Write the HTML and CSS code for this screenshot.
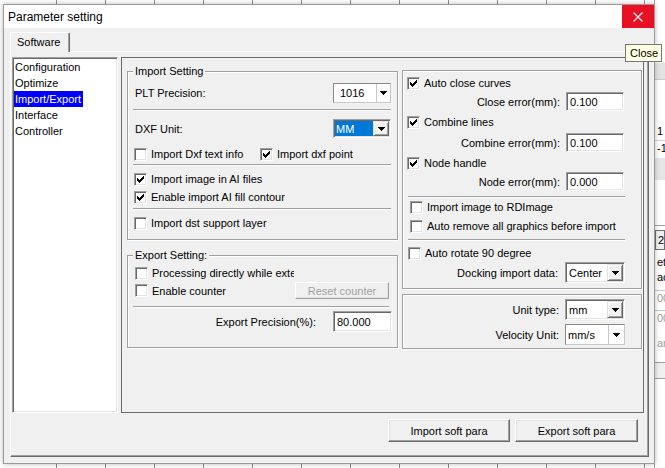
FILE: index.html
```html
<!DOCTYPE html>
<html>
<head>
<meta charset="utf-8">
<title>Parameter setting</title>
<link rel="stylesheet" href="styles.css">
</head>
<body>
<div class="app">
  <div class="app-grid"></div>
  <div class="app-side">
    <div class="sd sd0"></div>
    <div class="sd sd1"></div>
    <div class="sd sd2"></div>
    <div class="sd sd3">1</div>
    <div class="sd sd4">-1</div>
    <div class="sd sd5"></div>
    <div class="sd sd6"></div>
    <div class="sd sd7">2</div>
    <div class="sd sd8">etu</div>
    <div class="sd sd9">ac</div>
    <div class="sd sd10">000</div>
    <div class="sd sd11">000</div>
    <div class="sd sd12">arr</div>
    <div class="sd sd13"></div>
  </div>
</div>

<div class="dialog">
  <div class="titlebar">
    <span class="title">Parameter setting</span>
    <div class="close">
      <svg width="10" height="10" viewBox="0 0 10 10"><path d="M0.5 0.5L9.5 9.5M9.5 0.5L0.5 9.5" stroke="#fff" stroke-width="1.1" fill="none"/></svg>
    </div>
  </div>
  <div class="dlg-body">
    <div class="tabs"><div class="tab">Software</div></div>
    <div class="page">
      <div class="page-main">
        <div class="list">
          <div class="item"><span>Configuration</span></div>
          <div class="item"><span>Optimize</span></div>
          <div class="item"><span class="sel">Import/Export</span></div>
          <div class="item"><span>Interface</span></div>
          <div class="item"><span>Controller</span></div>
        </div>
        <div class="panel">
          <div class="col-left">
            <div class="group g-imp">
              <div class="caption">Import Setting</div>
              <div class="row r-plt">
                <span class="lbl grow">PLT Precision:</span>
                <div class="combo flat cw58 h20"><span class="cv cv-plt">1016</span><span class="fbtn fb14"><svg class="arr" width="7" height="4" viewBox="0 0 7 4"><path d="M0 0h7v1h-1v1h-1v1h-1v1h-1v-1h-1v-1h-1v-1h-1z"/></svg></span></div>
              </div>
              <div class="sep s-a"></div>
              <div class="row r-dxf">
                <span class="lbl grow">DXF Unit:</span>
                <div class="combo deep cw58 h19"><span class="cv sel-v">MM</span><span class="cbtn"><svg class="arr" width="7" height="4" viewBox="0 0 7 4"><path d="M0 0h7v1h-1v1h-1v1h-1v1h-1v-1h-1v-1h-1v-1h-1z"/></svg></span></div>
              </div>
              <div class="row r-chk1">
                <label class="chk w126"><span class="cb"></span>Import Dxf text info</label>
                <label class="chk"><span class="cb"><svg width="11" height="11" viewBox="0 0 11 11"><path d="M8 2h1v1h-1z M7 3h2v1h-2z M2 4h1v1h-1z M6 4h3v1h-3z M2 5h2v1h-2z M5 5h3v1h-3z M2 6h5v1h-5z M3 7h3v1h-3z M4 8h1v1h-1z"/></svg></span>Import dxf point</label>
              </div>
              <div class="sep s-b"></div>
              <div class="row r-ai1">
                <label class="chk"><span class="cb"><svg width="11" height="11" viewBox="0 0 11 11"><path d="M8 2h1v1h-1z M7 3h2v1h-2z M2 4h1v1h-1z M6 4h3v1h-3z M2 5h2v1h-2z M5 5h3v1h-3z M2 6h5v1h-5z M3 7h3v1h-3z M4 8h1v1h-1z"/></svg></span>Import image in AI files</label>
              </div>
              <div class="row r-ai2">
                <label class="chk"><span class="cb"><svg width="11" height="11" viewBox="0 0 11 11"><path d="M8 2h1v1h-1z M7 3h2v1h-2z M2 4h1v1h-1z M6 4h3v1h-3z M2 5h2v1h-2z M5 5h3v1h-3z M2 6h5v1h-5z M3 7h3v1h-3z M4 8h1v1h-1z"/></svg></span>Enable import AI fill contour</label>
              </div>
              <div class="sep s-c"></div>
              <div class="row r-dst">
                <label class="chk"><span class="cb"></span>Import dst support layer</label>
              </div>
            </div>

            <div class="group g-exp">
              <div class="caption">Export Setting:</div>
              <div class="row r-proc">
                <label class="chk"><span class="cb"></span><span class="clip">Processing directly while external</span></label>
              </div>
              <div class="row r-cnt">
                <label class="chk w160"><span class="cb"></span>Enable counter</label>
                <div class="btn-dis">Reset counter</div>
              </div>
              <div class="sep s-d"></div>
              <div class="row r-prec">
                <span class="lbl mr17">Export Precision(%):</span>
                <div class="inp iw59 h21">80.000</div>
              </div>
            </div>
          </div>

          <div class="col-right">
            <div class="group g-r1">
              <div class="row r-acc">
                <label class="chk"><span class="cb"><svg width="11" height="11" viewBox="0 0 11 11"><path d="M8 2h1v1h-1z M7 3h2v1h-2z M2 4h1v1h-1z M6 4h3v1h-3z M2 5h2v1h-2z M5 5h3v1h-3z M2 6h5v1h-5z M3 7h3v1h-3z M4 8h1v1h-1z"/></svg></span>Auto close curves</label>
              </div>
              <div class="row r-err r-e1">
                <span class="lbl mr6">Close error(mm):</span>
                <div class="inp iw58 h19">0.100</div>
              </div>
              <div class="row r-cl">
                <label class="chk"><span class="cb"><svg width="11" height="11" viewBox="0 0 11 11"><path d="M8 2h1v1h-1z M7 3h2v1h-2z M2 4h1v1h-1z M6 4h3v1h-3z M2 5h2v1h-2z M5 5h3v1h-3z M2 6h5v1h-5z M3 7h3v1h-3z M4 8h1v1h-1z"/></svg></span>Combine lines</label>
              </div>
              <div class="row r-err r-e2">
                <span class="lbl mr6">Combine error(mm):</span>
                <div class="inp iw58 h19">0.100</div>
              </div>
              <div class="row r-nh">
                <label class="chk"><span class="cb"><svg width="11" height="11" viewBox="0 0 11 11"><path d="M8 2h1v1h-1z M7 3h2v1h-2z M2 4h1v1h-1z M6 4h3v1h-3z M2 5h2v1h-2z M5 5h3v1h-3z M2 6h5v1h-5z M3 7h3v1h-3z M4 8h1v1h-1z"/></svg></span>Node handle</label>
              </div>
              <div class="row r-err r-e3">
                <span class="lbl mr6">Node error(mm):</span>
                <div class="inp iw58 h19">0.000</div>
              </div>
              <div class="sep s-e"></div>
              <div class="row r-rd">
                <label class="chk"><span class="cb"></span>Import image to RDImage</label>
              </div>
              <div class="row r-arm">
                <label class="chk"><span class="cb"></span>Auto remove all graphics before import</label>
              </div>
              <div class="sep s-f"></div>
              <div class="row r-rot">
                <label class="chk"><span class="cb"></span>Auto rotate 90 degree</label>
              </div>
              <div class="row r-dock">
                <span class="lbl mr7">Docking import data:</span>
                <div class="combo deep cw60 h21"><span class="cv">Center</span><span class="cbtn"><svg class="arr" width="7" height="4" viewBox="0 0 7 4"><path d="M0 0h7v1h-1v1h-1v1h-1v1h-1v-1h-1v-1h-1v-1h-1z"/></svg></span></div>
              </div>
            </div>

            <div class="group g-r2">
              <div class="row r-unit">
                <span class="lbl mr6">Unit type:</span>
                <div class="combo deep cw60 h21"><span class="cv">mm</span><span class="cbtn"><svg class="arr" width="7" height="4" viewBox="0 0 7 4"><path d="M0 0h7v1h-1v1h-1v1h-1v1h-1v-1h-1v-1h-1v-1h-1z"/></svg></span></div>
              </div>
              <div class="row r-vel">
                <span class="lbl mr6">Velocity Unit:</span>
                <div class="combo flat cw60 h21"><span class="cv">mm/s</span><span class="fbtn fb16"><svg class="arr" width="7" height="4" viewBox="0 0 7 4"><path d="M0 0h7v1h-1v1h-1v1h-1v1h-1v-1h-1v-1h-1v-1h-1z"/></svg></span></div>
              </div>
            </div>
          </div>
        </div>
      </div>
      <div class="page-buttons">
        <div class="btn">Import soft para</div>
        <div class="btn">Export soft para</div>
      </div>
    </div>
  </div>
</div>

<div class="tooltip">Close</div>
</body>
</html>
```

FILE: styles.css
```css
* { box-sizing: border-box; }
html, body { margin: 0; padding: 0; }
body {
  width: 665px;
  height: 468px;
  overflow: hidden;
  position: relative;
  background: #fff;
  font-family: "Liberation Sans", Arial, sans-serif;
  font-size: 11px;
  color: #000;
}

/* underlying application */
.app { display: flex; width: 665px; height: 468px; }
.app-grid {
  width: 654px;
  height: 468px;
  background-image: repeating-linear-gradient(90deg, transparent 0, transparent 48px, #8e8e8e 48px, #8e8e8e 49px);
  background-position: 8px 0;
}
.app-side { flex: 1; display: flex; flex-direction: column; overflow: hidden; border-left: 1px solid #9a9a9a; }
.sd { flex: none; padding-left: 2px; white-space: nowrap; line-height: 15px; }
.sd0 { height: 63px; }
.sd1 { height: 17px; background: #e3e3e3; border-bottom: 1px solid #c8c8c8; }
.sd2 { height: 44px; }
.sd3 { height: 17px; border-bottom: 1px solid #d0d0d0; }
.sd4 { height: 17px; }
.sd5 { height: 22px; background: #e6e6e6; }
.sd6 { height: 46px; border-bottom: 1px solid #a0a0a0; }
.sd7 { height: 20px; margin-top: 4px; border: 1px solid #707070; background: #f0f0f0; line-height: 18px; }
.sd8 { height: 15px; margin-top: 5px; }
.sd9 { height: 15px; }
.sd10 { height: 18px; margin-top: 5px; color: #a0a0a0; border-top: 1px solid #c8c8c8; }
.sd11 { height: 18px; margin-top: 2px; color: #a0a0a0; border-top: 1px solid #c8c8c8; }
.sd12 { height: 18px; margin-top: 8px; color: #a0a0a0; }
.sd13 { height: 17px; margin-top: 8px; border-top: 1px solid #a0a0a0; border-bottom: 1px solid #a0a0a0; background: #f0f0f0; }

/* dialog window */
.dialog {
  position: absolute;
  left: 3px;
  top: 4px;
  width: 652px;
  height: 460px;
  border: 1px solid #9a9a9a;
  background: #f0f0f0;
  box-shadow: 0 0 5px rgba(0, 0, 0, 0.28);
  display: flex;
  flex-direction: column;
}
.titlebar {
  height: 23px;
  background: #fff;
  display: flex;
  align-items: center;
  padding-left: 4px;
  font-size: 12px;
}
.title { flex: 1; }
.close {
  width: 32px;
  height: 23px;
  background: #e81123;
  display: flex;
  align-items: center;
  justify-content: center;
}
.close svg { display: block; }

.dlg-body { flex: 1; padding: 4px 5px 6px 6px; display: flex; flex-direction: column; }
.tabs { display: flex; height: 20px; }
.tab {
  position: relative;
  z-index: 1;
  width: 60px;
  height: 20px;
  padding-left: 6px;
  line-height: 18px;
  background: #f0f0f0;
  border-top: 1px solid #fff;
  border-left: 1px solid #fff;
  border-right: 1px solid #696969;
  box-shadow: inset -1px 0 0 #a0a0a0;
  border-radius: 2px 2px 0 0;
}
.page {
  margin-top: -1px;
  height: 406px;
  border: 1px solid;
  border-color: #fff #696969 #696969 #fff;
  box-shadow: inset -1px -1px 0 #a0a0a0;
  padding: 5px 4px 0 1px;
}
.page-main { display: flex; gap: 3px; height: 356px; }

/* tree list */
.list {
  width: 106px;
  height: 356px;
  background: #fff;
  border: 1px solid;
  border-color: #a0a0a0 #fff #fff #a0a0a0;
  box-shadow: inset 1px 1px 0 #696969, inset -1px -1px 0 #e3e3e3;
  padding: 1px;
}
.item { height: 16px; line-height: 16px; white-space: nowrap; }
.item span { padding: 0 2px 0 1px; display: inline-block; height: 16px; }
.item .sel { background: #0000ff; color: #fff; }

/* settings panel */
.panel {
  width: 523px;
  height: 356px;
  border: 1px solid #6b6b6b;
  display: flex;
  gap: 4px;
  padding: 0 1px 0 5px;
}
.col-left { width: 271px; }
.col-right { width: 240px; }

.group {
  border: 1px solid #a0a0a0;
  box-shadow: inset 1px 1px 0 #fff, 1px 1px 0 #fff;
}
.caption {
  width: fit-content;
  margin: -7px 0 0 5px;
  padding: 0 2px;
  height: 13px;
  line-height: 13px;
  background: #f0f0f0;
}
.g-imp { margin-top: 13px; padding-bottom: 8px; }
.g-exp { margin-top: 15px; padding-bottom: 15px; }
.g-r1 { margin-top: 12px; padding-bottom: 5px; }
.g-r2 { margin-top: 5px; padding-bottom: 3px; }

.row { display: flex; align-items: center; height: 16px; white-space: nowrap; }
.grow { flex: 1; }
.mr6 { margin-right: 6px; }
.mr7 { margin-right: 7px; }
.mr17 { margin-right: 17px; }

.r-plt { margin: 5px 6px 0 7px; height: 20px; }
.r-dxf { margin: 8px 6px 0 7px; height: 19px; }
.r-chk1 { margin: 8px 0 0 6px; }
.r-ai1 { margin: 5px 0 0 6px; }
.r-ai2 { margin: 2px 0 0 6px; }
.r-dst { margin: 5px 0 0 6px; }

.r-proc { margin: 3px 0 0 7px; }
.r-cnt { margin: 1px 0 0 7px; height: 17px; }
.r-prec { margin: 3px 5px 0 0; height: 21px; justify-content: flex-end; }

.r-acc { margin: 4px 0 0 4px; }
.r-err { justify-content: flex-end; height: 19px; margin-right: 17px; }
.r-e1 { margin-top: 1px; }
.r-cl { margin: 3px 0 0 4px; }
.r-e2 { margin-top: 3px; }
.r-nh { margin: 3px 0 0 4px; }
.r-e3 { margin-top: 1px; }
.r-rd { margin: 1px 0 0 7px; }
.r-arm { margin: 3px 0 0 7px; }
.r-rot { margin: 4px 0 0 5px; }
.r-dock { margin: 1px 16px 0 0; height: 21px; justify-content: flex-end; }
.r-unit { margin: 4px 16px 0 0; height: 21px; justify-content: flex-end; }
.r-vel { margin: 4px 16px 0 0; height: 21px; justify-content: flex-end; }

.sep { height: 2px; border-top: 1px solid #a0a0a0; border-bottom: 1px solid #fff; }
.s-a { margin: 6px 6px 0 5px; }
.s-b { margin: 2px 6px 0 5px; }
.s-c { margin: 3px 6px 0 5px; }
.s-d { margin: 7px 8px 0 5px; }
.s-e { margin: 5px 16px 0 5px; }
.s-f { margin: 5px 16px 0 5px; }

/* checkbox */
.chk { display: flex; align-items: center; height: 16px; white-space: nowrap; }
.w126 { width: 126px; }
.w160 { width: 160px; }
.cb {
  flex: none;
  width: 13px;
  height: 13px;
  margin-right: 4px;
  background: #fff;
  border: 1px solid;
  border-color: #a0a0a0 #fff #fff #a0a0a0;
  box-shadow: inset 1px 1px 0 #696969, inset -1px -1px 0 #e3e3e3;
}
.cb svg { display: block; shape-rendering: crispEdges; }
.cb svg path { fill: #000; }
.clip { display: block; width: 142px; overflow: hidden; }

/* inputs */
.inp {
  flex: none;
  background: #fff;
  border: 1px solid;
  border-color: #a0a0a0 #fff #fff #a0a0a0;
  box-shadow: inset 1px 1px 0 #696969, inset -1px -1px 0 #e3e3e3;
  padding-left: 3px;
  display: flex;
  align-items: center;
}
.iw58 { width: 58px; }
.iw59 { width: 59px; }
.h19 { height: 19px; }
.h20 { height: 20px; }
.h21 { height: 21px; }

/* combos */
.combo { flex: none; display: flex; background: #fff; }
.cw58 { width: 58px; }
.cw60 { width: 60px; }
.cv { flex: 1; display: flex; align-items: center; padding-left: 2px; overflow: hidden; }
.cv-plt { padding-left: 6px; }
.arr { display: block; shape-rendering: crispEdges; }
.arr path { fill: #000; }
.combo.deep {
  border: 1px solid;
  border-color: #a0a0a0 #fff #fff #a0a0a0;
  box-shadow: inset 1px 1px 0 #696969, inset -1px -1px 0 #e3e3e3;
  padding: 1px;
}
.sel-v { background: #0078d7; color: #fff; padding-left: 1px; }
.cbtn {
  flex: none;
  width: 16px;
  background: #f0f0f0;
  border: 1px solid;
  border-color: #e3e3e3 #696969 #696969 #e3e3e3;
  box-shadow: inset 1px 1px 0 #fff, inset -1px -1px 0 #a0a0a0;
  display: flex;
  align-items: center;
  justify-content: center;
}
.combo.flat {
  border: 1px solid;
  border-color: #8a8a8a #c8c8c8 #c8c8c8 #8a8a8a;
}
.fbtn {
  flex: none;
  border-left: 1px solid #c8c8c8;
  display: flex;
  align-items: center;
  justify-content: center;
  background: #fff;
}
.fb14 { width: 14px; }
.fb16 { width: 16px; }

/* buttons */
.btn-dis {
  width: 94px;
  height: 17px;
  display: flex;
  align-items: center;
  justify-content: center;
  color: #a0a0a0;
  border: 1px solid;
  border-color: #fff #a0a0a0 #a0a0a0 #fff;
  box-shadow: inset -1px -1px 0 #e3e3e3;
}
.page-buttons { display: flex; justify-content: flex-end; gap: 5px; margin-top: 6px; padding-right: 6px; }
.btn {
  height: 23px;
  width: 122px;
  display: flex;
  align-items: center;
  justify-content: center;
  background: #f0f0f0;
  border: 1px solid;
  border-color: #fff #696969 #696969 #fff;
  box-shadow: inset -1px -1px 0 #a0a0a0, inset 1px 1px 0 #e3e3e3;
}
.btn + .btn { width: 123px; }

/* tooltip over the close button */
.tooltip {
  position: absolute;
  left: 625px;
  top: 44px;
  width: 37px;
  height: 18px;
  border: 1px solid #767676;
  background: #ffffe1;
  padding-left: 4px;
  line-height: 16px;
  font-size: 11px;
  white-space: nowrap;
}
```
